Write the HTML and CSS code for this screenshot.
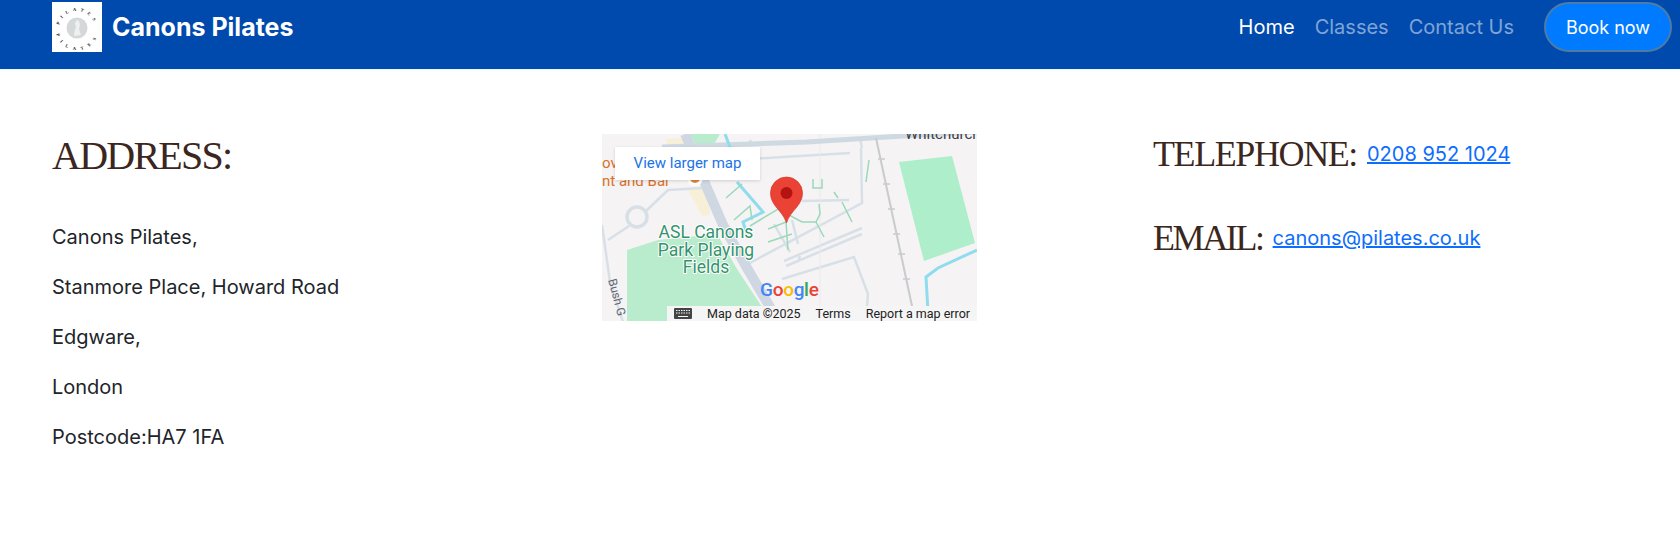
FILE: index.html
```html
<!DOCTYPE html>
<html lang="en">
<head>
  <meta charset="UTF-8">
  <title>Canons Pilates</title>
  <link rel="stylesheet" href="styles.css">
</head>
<body>
  <header class="navbar">
    <a class="brand" href="#">
      <svg class="logo" viewBox="0 0 50 50">
        <defs>
          <path id="ring-top" d="M7 27 A18 18 0 0 1 43 27"/>
          <path id="ring-bottom" d="M7 27 A18 18 0 0 0 43 27"/>
        </defs>
        <rect width="50" height="50" fill="#fff"/>
        <circle cx="25" cy="26" r="10.500" fill="#d5d8d9"/>
        <path d="M22 34c0-4 1-6 2-9l-1-3c0-3 3-5 4-3l1 4-1 4 2 6z" fill="#eef0f0"/>
        <text class="ring"><textPath href="#ring-top" startOffset="50%" text-anchor="middle">PILATES</textPath></text>
        <text class="ring"><textPath href="#ring-bottom" startOffset="50%" text-anchor="middle" dominant-baseline="hanging">PILATES</textPath></text>
      </svg>
      <span>Canons Pilates</span>
    </a>
    <nav class="links">
      <a class="active" href="#">Home</a>
      <a href="#">Classes</a>
      <a href="#">Contact Us</a>
      <a class="book" href="#">Book now</a>
    </nav>
  </header>

  <main class="contact">
    <section class="address">
      <h2>ADDRESS:</h2>
      <p>Canons Pilates,</p>
      <p>Stanmore Place, Howard Road</p>
      <p>Edgware,</p>
      <p>London</p>
      <p>Postcode:HA7 1FA</p>
    </section>

    <section class="map">
      <svg class="map-art" viewBox="0 0 375 187">
        <rect width="375" height="187" fill="#f5f3f4"/>
        <!-- parks -->
        <polygon points="25,116 56,106 115,100 135,135 160,173 172,188 25,188" fill="#b8eccd"/>
        <polygon points="297,28 350,22 373,109 322,127" fill="#aeeeca"/>
        <polygon points="88,0 118,0 112,10 94,11" fill="#b8eccd"/>
        <polygon points="85,54 105,52 108,81 100,82" fill="#f8efd8"/>
        <polygon points="64,5 82,4 84,14 66,14" fill="#f8efd8"/>
        <!-- roads -->
        <g fill="none" stroke="#d8e0e7" stroke-width="2.500">
          <circle cx="35" cy="83" r="10" stroke-width="3.500"/>
          <path d="M0 91 8 148 21 188"/>
          <path d="M6 106 27 92M44 77 66 56 101 54"/>
          <path d="M146 130 260 69 259 14M248 19 147 25M247 66 200 67"/>
          <path d="M182 127 260 94M184 132 260 100M196 128 198 122M180 145 252 123 266 160 265 172"/>
          <path d="M260 14 258 4M148 6 150 12"/>
          <path d="M172 90 188 118M190 86 196 110"/>
          <path d="M218 0 218 188" stroke="#ebe9ea" stroke-width="1"/>
        </g>
        <path d="M60 13 205 8 301 2 375 -2" fill="none" stroke="#cfd9e2" stroke-width="5"/>
        <path d="M83 0 88 11 105 54 121 91 145 134 172 180" fill="none" stroke="#cfd8e2" stroke-width="10"/>
        <!-- railway -->
        <path d="M274 4 310 172" fill="none" stroke="#c9cbce" stroke-width="2"/>
        <path d="M276 25h7M281 50h7M286 75h7M291 100h7M296 120h7M301 145h7" stroke="#c9cbce" stroke-width="1.500"/>
        <!-- water -->
        <g fill="none" stroke="#8fdcee" stroke-width="3">
          <path d="M123 0 128 13"/>
          <path d="M135 48 161 78 141 88 146 104"/>
          <path d="M375 116 336 134 324 143 326 178"/>
        </g>
        <!-- paths -->
        <g fill="none" stroke="#9ad9ba" stroke-width="1.500">
          <path d="M124 64 140 50M132 86 148 72 150 86M148 92 176 75 200 88M166 95 184 88 186 116M166 108 190 100"/>
          <path d="M200 88 214 88 218 80 217 70M214 88 222 103M232 58 236 64M240 68 250 88"/>
          <path d="M211 45V54H220V45M267 26 264 48"/>
        </g>
        <!-- labels -->
        <g class="park-label">
          <text x="104" y="104">ASL Canons</text>
          <text x="104" y="122">Park Playing</text>
          <text x="104" y="139">Fields</text>
        </g>
        <text class="place-label" x="0" y="34">ov</text>
        <text class="place-label" x="0" y="52">nt and Bar</text>
        <circle cx="93" cy="44" r="8" fill="#fff"/>
        <circle cx="93" cy="44" r="5" fill="#e8833a"/>
        <text class="road-label" transform="translate(6 146) rotate(75)">Bush G</text>
        <text class="town-label" x="303" y="5">Whitchurch</text>
        <!-- pin -->
        <g transform="translate(-.5 0)">
          <path d="M185 89C181 76 169 72 169 59A16 16 0 0 1 201 59C201 72 189 76 185 89Z" fill="#ea4335" stroke="#d33a2c" stroke-width=".7"/>
          <circle cx="185" cy="59" r="6" fill="#b31412"/>
        </g>
        <!-- google mark -->
        <text class="google-mark" x="158" y="162"><tspan fill="#4285f4">G</tspan><tspan fill="#ea4335">o</tspan><tspan fill="#fbbc05">o</tspan><tspan fill="#4285f4">g</tspan><tspan fill="#34a853">l</tspan><tspan fill="#ea4335">e</tspan></text>
        <!-- keyboard -->
        <rect x="65" y="172" width="310" height="15" fill="#f5f5f5"/>
        <rect x="72" y="174" width="18" height="11" rx="1" fill="#444"/>
        <path d="M74 176.500h14M74 179h14" stroke="#f5f5f5" stroke-width="1" stroke-dasharray="1.500 1"/>
        <path d="M76 182.500h10" stroke="#f5f5f5" stroke-width="1"/>
      </svg>
      <a class="larger" href="#">View larger map</a>
      <div class="attrib">
        <span>Map data ©2025</span>
        <span>Terms</span>
        <span>Report a map error</span>
      </div>
    </section>

    <section class="reach">
      <div class="reach-line">
        <h3 class="tel">TELEPHONE:</h3>
        <a href="#">0208 952 1024</a>
      </div>
      <div class="reach-line">
        <h3 class="mail">EMAIL:</h3>
        <a href="#">canons@pilates.co.uk</a>
      </div>
    </section>
  </main>
</body>
</html>
```

FILE: styles.css
```css
body {
  font-family: Inter, sans-serif;
  background-color: #fff;
  color: #212529;
  margin: 0;
}
a {
  color: #0d6efd;
}
.navbar {
  display: flex;
  align-items: flex-start;
  justify-content: space-between;
  height: 67px;
  padding: 2px 8px 0 52px;
  background-color: #004aad;
  box-shadow: 0 1px 2px rgba(160, 230, 240, 0.3);
}
.brand {
  display: flex;
  align-items: center;
  gap: 10px;
  color: #fff;
  font-size: 25px;
  font-weight: 700;
  text-decoration: none;
}
.logo {
  width: 50px;
  height: 50px;
}
.ring {
  font-family: "Liberation Serif", serif;
  font-size: 4.500px;
  font-weight: 700;
  letter-spacing: 4.200px;
  fill: #222;
}
.links {
  display: flex;
  align-items: center;
  gap: 20px;
  height: 50px;
  font-size: 20px;
}
.links a {
  color: rgba(255, 255, 255, 0.5);
  text-decoration: none;
}
.links a.active {
  color: #fff;
}
.links a.book {
  display: flex;
  align-items: center;
  justify-content: center;
  box-sizing: border-box;
  width: 128px;
  height: 50px;
  margin-left: 10px;
  background-color: #007bff;
  border: 2px solid #4d7ba8;
  border-radius: 25px;
  color: #fff;
  font-size: 18px;
}
.contact {
  display: grid;
  grid-template-columns: 550px 551px 1fr;
  padding: 65px 0 0 52px;
}
h2, h3 {
  margin: 0;
  font-family: "Liberation Serif", serif;
  font-weight: 400;
  color: #3b2620;
}
h2 {
  font-size: 40px;
  line-height: 44px;
  letter-spacing: -1.750px;
  margin-bottom: 44px;
}
.address p {
  margin: 0 0 20px;
  font-size: 20px;
  line-height: 30px;
}
.map {
  position: relative;
  width: 375px;
  height: 187px;
}
.map-art {
  display: block;
  width: 375px;
  height: 187px;
}
.park-label text {
  font-family: Roboto, sans-serif;
  font-size: 17.500px;
  fill: #35936c;
  stroke: #fff;
  stroke-width: 2px;
  paint-order: stroke;
  text-anchor: middle;
}
.place-label {
  font-family: Roboto, sans-serif;
  font-size: 15px;
  fill: #d9702a;
}
.road-label {
  font-family: Roboto, sans-serif;
  font-size: 12px;
  fill: #5f6670;
}
.town-label {
  font-family: Roboto, sans-serif;
  font-size: 15px;
  fill: #3c4043;
}
.google-mark {
  font-family: Roboto, sans-serif;
  font-size: 19px;
  font-weight: 500;
  letter-spacing: -0.300px;
}
.larger {
  position: absolute;
  top: 13px;
  left: 13px;
  width: 145px;
  height: 33px;
  background: #fff;
  box-shadow: 0 1px 3px rgba(0, 0, 0, 0.15);
  color: #1a73e8;
  font-family: Roboto, sans-serif;
  font-size: 15px;
  line-height: 33px;
  text-align: center;
  text-decoration: none;
}
.attrib {
  position: absolute;
  left: 105px;
  bottom: 0;
  display: flex;
  gap: 15px;
  height: 15px;
  color: #222;
  font-family: Roboto, sans-serif;
  font-size: 12.500px;
  line-height: 15px;
  white-space: nowrap;
}
.reach {
  margin-top: -4px;
}
.reach-line {
  display: flex;
  align-items: center;
  gap: 10px;
  height: 48px;
  margin-bottom: 36px;
  font-size: 20px;
}
h3 {
  font-size: 36px;
  line-height: 48px;
}
h3.tel {
  letter-spacing: -1.400px;
}
h3.mail {
  letter-spacing: -2.400px;
}
```
